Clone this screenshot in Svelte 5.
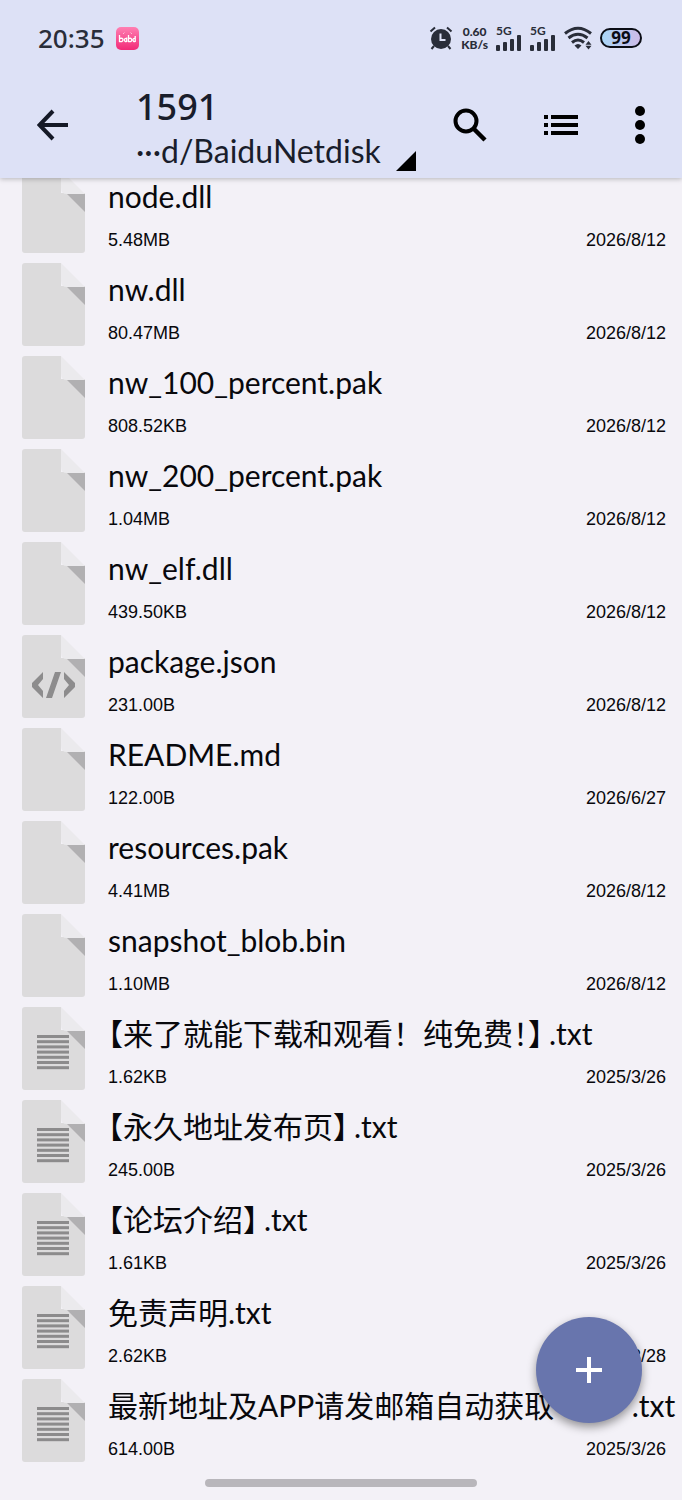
<script>
  const files = [
    { name: "node.dll", size: "5.48MB", date: "2026/8/12", type: "file" },
    { name: "nw.dll", size: "80.47MB", date: "2026/8/12", type: "file" },
    { name: "nw_100_percent.pak", size: "808.52KB", date: "2026/8/12", type: "file" },
    { name: "nw_200_percent.pak", size: "1.04MB", date: "2026/8/12", type: "file" },
    { name: "nw_elf.dll", size: "439.50KB", date: "2026/8/12", type: "file" },
    { name: "package.json", size: "231.00B", date: "2026/8/12", type: "code" },
    { name: "README.md", size: "122.00B", date: "2026/6/27", type: "file" },
    { name: "resources.pak", size: "4.41MB", date: "2026/8/12", type: "file" },
    { name: "snapshot_blob.bin", size: "1.10MB", date: "2026/8/12", type: "file" },
    { name: "【来了就能下载和观看！纯免费！】.txt", size: "1.62KB", date: "2025/3/26", type: "text" },
    { name: "【永久地址发布页】.txt", size: "245.00B", date: "2025/3/26", type: "text" },
    { name: "【论坛介绍】.txt", size: "1.61KB", date: "2025/3/26", type: "text" },
    { name: "免责声明.txt", size: "2.62KB", date: "2025/3/28", type: "text" },
    { name: "最新地址及APP请发邮箱自动获取~～　.txt", size: "614.00B", date: "2025/3/26", type: "text" },
  ];

  const textLines = [0, 1, 2, 3, 4, 5, 6];

  // brackets are set half width, so they need their own spans
  function splitBrackets(name) {
    return name.split(/(【|！?】)/).filter((part) => part !== "");
  }
</script>

{#snippet signal()}
  <div class="signal">
    <span>5G</span>
    <svg width="26" height="16" viewBox="0 0 26 16">
      <rect x="0" y="10" width="4" height="6" rx="1" />
      <rect x="7" y="7" width="4" height="9" rx="1" />
      <rect x="14" y="4" width="4" height="12" rx="1" />
      <rect x="21" y="0" width="4" height="16" rx="1" />
    </svg>
  </div>
{/snippet}

<div class="page">
  <header>
    <div class="status">
      <span class="clock">20:35</span>
      <svg class="app" width="23" height="23" viewBox="0 0 23 23">
        <defs>
          <linearGradient id="pink" x1="0" y1="0" x2="0" y2="1">
            <stop offset="0" stop-color="#ff7fb2" />
            <stop offset="1" stop-color="#f22a78" />
          </linearGradient>
        </defs>
        <rect width="23" height="23" rx="5" fill="url(#pink)" />
        <path d="M3.500 8v6.500q3.500.5 3.500-1.700T3.500 11.500M10.500 11.500q-2.200-.3-2 1.600t2.200 1.300V10.500M12.500 8v6.500q3.500.5 3.200-1.700t-3-1.300M19 11.500q-2.200-.3-2 1.600t2.200 1.300V9" fill="none" stroke="#fff" stroke-width="1.300" />
        <path d="M7 7l1.500-1.500M14.500 5.500L16 7" stroke="#ffb9d4" stroke-width="1" />
      </svg>
      <div class="indicators">
        <svg width="24" height="24" viewBox="0 0 24 24">
          <circle cx="12" cy="13" r="10" fill="#292d39" />
          <path d="M1.500 5.500L6 1.500M22.500 5.500L18 1.500M5 20l-2.500 3M19 20l2.500 3" stroke="#292d39" stroke-width="2" />
          <path d="M11.500 7.500v6.500h5" fill="none" stroke="#dde1f6" stroke-width="2" />
        </svg>
        <div class="speed"><span>0.60</span><span>KB/s</span></div>
        {@render signal()}
        {@render signal()}
        <svg width="28" height="24" viewBox="0 0 28 24">
          <g fill="none" stroke="#292d39" stroke-width="3">
            <path d="M1 7.500Q14-3 27 7.500" />
            <path d="M4.500 12Q14 4.500 23.500 12" />
            <path d="M8 16.500Q14 11.500 20 16.500" />
          </g>
          <path d="M10.500 19.500Q14 16.500 17.500 19.500L14 23zM24.500 15l3 3.700h-6zM24.500 23.500l3-3.700h-6z" fill="#292d39" />
        </svg>
        <div class="battery"><span>99</span></div>
      </div>
    </div>

    <div class="toolbar">
      <button class="back" aria-label="Back">
        <svg width="32" height="32" viewBox="0 0 32 32">
          <path d="M31 16H3M16 2L2.500 16L16 30" fill="none" stroke="#151927" stroke-width="4" />
        </svg>
      </button>
      <div class="title">
        <h1>1591</h1>
        <button class="path">
          <span>···d/BaiduNetdisk</span>
          <svg width="20" height="20" viewBox="0 0 20 20"><path d="M20 0v20H0z" /></svg>
        </button>
      </div>
      <div class="actions">
        <button aria-label="Search">
          <svg width="36" height="36" viewBox="0 0 36 36">
            <circle cx="14" cy="14" r="10.500" fill="none" stroke="#000" stroke-width="4" />
            <path d="M22 22L33 33" stroke="#000" stroke-width="4.500" />
          </svg>
        </button>
        <button aria-label="List view">
          <svg width="36" height="22" viewBox="0 0 36 22">
            <path d="M1 3h4M1 11h4M1 19h4M8 3h27M8 11h27M8 19h27" stroke="#000" stroke-width="4" />
          </svg>
        </button>
        <button aria-label="More">
          <svg width="12" height="40" viewBox="0 0 12 40">
            <circle cx="6" cy="6" r="5" />
            <circle cx="6" cy="20" r="5" />
            <circle cx="6" cy="34" r="5" />
          </svg>
        </button>
      </div>
    </div>
  </header>

  <ul>
    {#each files as file}
      <li>
        <svg class="icon" width="63" height="83" viewBox="0 0 63 83">
          <path d="M3 0H39V23H63V80Q63 83 60 83H3Q0 83 0 80V3Q0 0 3 0z" fill="#dcdbdc" />
          <path d="M39 0L63 24H45Q39 24 39 18z" fill="#ebeaed" />
          <path d="M45 24H63V42z" fill="#b1b0b2" />
          {#if file.type == "code"}
            <path d="M21 37v7l-5 6l5 6v7L10 52v-4zM42 37v7l5 6l-5 6v7L53 52v-4zM33 37h6L30 63h-6z" fill="#8d8c8d" />
          {:else if file.type == "text"}
            {#each textLines as line}
              <rect x="15" y={28 + line * 5.2} width="32" height="3" fill="#8c8b8c" />
            {/each}
          {/if}
        </svg>
        <div class="info">
          <div class="name">{#each splitBrackets(file.name) as part}<span class:open={part == "【"} class:close={part.endsWith("】")}>{part}</span>{/each}</div>
          <div class="meta"><span>{file.size}</span><span>{file.date}</span></div>
        </div>
      </li>
    {/each}
  </ul>

  <button class="add" aria-label="Add">
    <svg width="28" height="28" viewBox="0 0 28 28">
      <path d="M14 1v26M1 14h26" stroke="#fff" stroke-width="4" />
    </svg>
  </button>

  <footer><div class="handle"></div></footer>
</div>

<style>
  :global(body) {
    margin: 0;
    background: #f3f1f7;
  }
  .page {
    position: relative;
    overflow: hidden;
    background: #f3f1f7;
    color: #08080c;
    font-family: Lato, "Noto Sans CJK SC", sans-serif;
  }
  svg {
    display: block;
    flex: none;
  }
  button {
    display: flex;
    align-items: center;
    justify-content: center;
    padding: 0;
    border: none;
    background: none;
    color: inherit;
    font: inherit;
    cursor: pointer;
  }
  header {
    position: relative;
    z-index: 1;
    background: #dde1f6;
    box-shadow: 0 1px 5px rgba(0, 0, 0, 0.25);
  }
  .status {
    display: flex;
    align-items: center;
    height: 76px;
    padding: 0 40px 0 38px;
    color: #292d39;
  }
  .clock {
    font-family: "Noto Sans", sans-serif;
    font-size: 26px;
    font-weight: 500;
  }
  .app {
    margin-left: 11px;
  }
  .indicators {
    display: flex;
    align-items: center;
    gap: 8px;
    margin-left: auto;
    font-weight: 700;
  }
  .speed {
    display: flex;
    flex-direction: column;
    align-items: center;
    font-size: 12px;
    font-weight: 900;
    line-height: 13px;
  }
  .signal {
    display: flex;
    flex-direction: column;
    font-size: 12px;
    line-height: 9px;
  }
  .signal svg {
    fill: #292d39;
  }
  .battery {
    box-sizing: border-box;
    width: 42px;
    height: 20px;
    border: 2px solid #0b0d16;
    border-radius: 10px;
    background: linear-gradient(90deg, #a9d6f8, #cdbbe8);
    color: #0b0d16;
    font-family: "Noto Sans", sans-serif;
    font-size: 17px;
    line-height: 16px;
    text-align: center;
  }
  .toolbar {
    display: flex;
    align-items: center;
    height: 98px;
    padding: 0 36px 4px 37px;
  }
  .back {
    width: 32px;
    height: 48px;
  }
  .title {
    flex: 1;
    margin-top: 4px;
    margin-left: 67px;
    color: #191d2b;
  }
  h1 {
    margin: 0;
    font-family: "Noto Sans", sans-serif;
    font-size: 36px;
    font-weight: 500;
    line-height: 48px;
  }
  .path {
    gap: 15px;
    align-items: flex-end;
    font-size: 32px;
    line-height: 40px;
  }
  .actions {
    display: flex;
    align-items: center;
    gap: 55px;
  }
  ul {
    margin: -8px 0 0;
    padding: 0;
    list-style: none;
  }
  li {
    display: flex;
    height: 93px;
    padding: 0 16px 0 22px;
  }
  .info {
    flex: 1;
    min-width: 0;
    margin-left: 23px;
  }
  .name {
    height: 56px;
    font-size: 30px;
    line-height: 52px;
    white-space: nowrap;
  }
  .open,
  .close {
    font-feature-settings: "halt";
  }
  .close {
    margin-right: 6px;
  }
  .meta {
    display: flex;
    justify-content: space-between;
    font-family: "Liberation Sans", Arial, sans-serif;
    font-size: 18px;
    line-height: 28px;
  }
  .add {
    position: absolute;
    right: 40px;
    bottom: 77px;
    width: 106px;
    height: 106px;
    border-radius: 50%;
    background: #6875ad;
    box-shadow: 0 4px 10px rgba(0, 0, 0, 0.4);
  }
  footer {
    display: flex;
    justify-content: center;
    height: 28px;
  }
  .handle {
    width: 40%;
    height: 8px;
    margin-top: 7px;
    border-radius: 4px;
    background: #b8b6bb;
  }
</style>
